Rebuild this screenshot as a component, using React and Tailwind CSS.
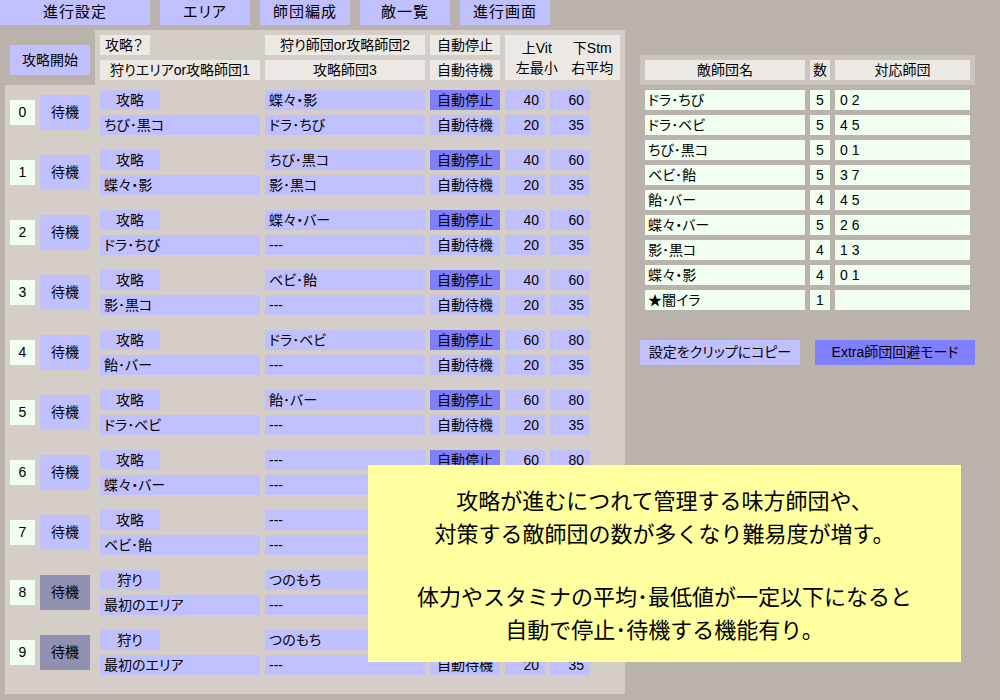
import React from "react";

const rows = [
  { n: 0, wait: "bg-[#c0c0ff]", type: "攻略", area: "ちび･黒コ", a: "蝶々・影", b: "ドラ･ちび", v: [40, 20], s: [60, 35] },
  { n: 1, wait: "bg-[#c0c0ff]", type: "攻略", area: "蝶々・影", a: "ちび･黒コ", b: "影･黒コ", v: [40, 20], s: [60, 35] },
  { n: 2, wait: "bg-[#c0c0ff]", type: "攻略", area: "ドラ･ちび", a: "蝶々・バー", b: "---", v: [40, 20], s: [60, 35] },
  { n: 3, wait: "bg-[#c0c0ff]", type: "攻略", area: "影･黒コ", a: "ベビ･飴", b: "---", v: [40, 20], s: [60, 35] },
  { n: 4, wait: "bg-[#c0c0ff]", type: "攻略", area: "飴･バー", a: "ドラ･ベビ", b: "---", v: [60, 20], s: [80, 35] },
  { n: 5, wait: "bg-[#c0c0ff]", type: "攻略", area: "ドラ･ベビ", a: "飴･バー", b: "---", v: [60, 20], s: [80, 35] },
  { n: 6, wait: "bg-[#c0c0ff]", type: "攻略", area: "蝶々・バー", a: "---", b: "---", v: [60, 20], s: [80, 35] },
  { n: 7, wait: "bg-[#c0c0ff]", type: "攻略", area: "ベビ･飴", a: "---", b: "---", v: [60, 20], s: [80, 35] },
  { n: 8, wait: "bg-[#9090b0]", type: "狩り", area: "最初のエリア", a: "つのもち", b: "---", v: [60, 20], s: [80, 35] },
  { n: 9, wait: "bg-[#9090b0]", type: "狩り", area: "最初のエリア", a: "つのもち", b: "---", v: [60, 20], s: [80, 35] },
];

const enemies = [
  ["ドラ･ちび", "5", "0 2"],
  ["ドラ･ベビ", "5", "4 5"],
  ["ちび･黒コ", "5", "0 1"],
  ["ベビ･飴", "5", "3 7"],
  ["飴･バー", "4", "4 5"],
  ["蝶々・バー", "5", "2 6"],
  ["影･黒コ", "4", "1 3"],
  ["蝶々・影", "4", "0 1"],
  ["★闇イラ", "1", ""],
];

const tabs = [
  ["進行設定", "w-[150px]"],
  ["エリア", "w-[90px]"],
  ["師団編成", "w-[90px]"],
  ["敵一覧", "w-[90px]"],
  ["進行画面", "w-[90px]"],
];

function Box({ className = "", children }) {
  return (
    <div className={`h-[20px] leading-[20px] whitespace-nowrap overflow-hidden ${className}`}>
      {children}
    </div>
  );
}

function Row({ r }) {
  return (
    <div className="flex h-[45px] items-start">
      <div className="mt-[10px] w-[25px] h-[25px] bg-[#f0fff0] flex items-center justify-center">
        {r.n}
      </div>
      <div className={`ml-[5px] mt-[5px] w-[50px] h-[35px] flex items-center justify-center ${r.wait}`}>
        待機
      </div>
      <div className="ml-[10px] flex flex-col gap-[5px]">
        <div className="flex gap-[5px]">
          <div className="w-[160px]">
            <Box className="w-[60px] bg-[#c0c0ff] text-center">{r.type}</Box>
          </div>
          <Box className="w-[160px] bg-[#c0c0ff] pl-[4px]">{r.a}</Box>
          <Box className="w-[70px] bg-[#8080ff] text-center">自動停止</Box>
          <Box className="w-[40px] bg-[#c0c0ff] text-right pr-[6px]">{r.v[0]}</Box>
          <Box className="w-[40px] bg-[#c0c0ff] text-right pr-[6px]">{r.s[0]}</Box>
        </div>
        <div className="flex gap-[5px]">
          <Box className="w-[160px] bg-[#c0c0ff] pl-[4px]">{r.area}</Box>
          <Box className="w-[160px] bg-[#c0c0ff] pl-[4px]">{r.b}</Box>
          <Box className="w-[70px] bg-[#c0c0ff] text-center">自動待機</Box>
          <Box className="w-[40px] bg-[#c0c0ff] text-right pr-[6px]">{r.v[1]}</Box>
          <Box className="w-[40px] bg-[#c0c0ff] text-right pr-[6px]">{r.s[1]}</Box>
        </div>
      </div>
    </div>
  );
}

export default function App() {
  return (
    <div className="relative w-[1000px] h-[700px] overflow-hidden bg-[#bab2ac] text-black text-[14px] font-['Liberation_Sans','Noto_Sans_CJK_JP',sans-serif] [font-feature-settings:'palt']">
      {/* tabs */}
      <div className="flex gap-[10px] h-[25px]">
        {tabs.map(([t, w]) => (
          <div key={t} className={`${w} h-[25px] bg-[#c0c0ff] flex items-center justify-center text-[15px] tracking-[1px]`}>
            {t}
          </div>
        ))}
      </div>

      <div className="flex mt-[5px]">
        {/* left panel */}
        <div className="ml-[5px] w-[620px] flex flex-col">
          <div className="flex h-[55px]">
            <div className="w-[90px] bg-[#bab2ac]">
              <div className="ml-[5px] mt-[15px] w-[80px] h-[30px] bg-[#c0c0ff] flex items-center justify-center">
                攻略開始
              </div>
            </div>
            <div className="flex-1 bg-[#d5cdc7] pl-[5px] pt-[5px] flex gap-[5px]">
              <div className="flex flex-col gap-[5px] w-[160px]">
                <Box className="w-[50px] bg-[#ece9e4] pl-[5px]">攻略？</Box>
                <Box className="w-[160px] bg-[#ece9e4] text-center">狩りエリアor攻略師団1</Box>
              </div>
              <div className="flex flex-col gap-[5px] w-[160px]">
                <Box className="bg-[#ece9e4] text-center">狩り師団or攻略師団2</Box>
                <Box className="bg-[#ece9e4] text-center">攻略師団3</Box>
              </div>
              <div className="flex flex-col gap-[5px] w-[70px]">
                <Box className="bg-[#ece9e4] text-center">自動停止</Box>
                <Box className="bg-[#ece9e4] text-center">自動待機</Box>
              </div>
              <div className="w-[115px] h-[45px] bg-[#ece9e4] grid grid-cols-2 content-center leading-[20px] text-center pl-[4px]">
                <div>上Vit</div>
                <div>下Stm</div>
                <div>左最小</div>
                <div>右平均</div>
              </div>
            </div>
          </div>
          <div className="h-[609px] bg-[#d5cdc7] pl-[5px] pt-[5px] flex flex-col gap-[15px]">
            {rows.map((r) => (
              <Row key={r.n} r={r} />
            ))}
          </div>
        </div>

        {/* right panel */}
        <div className="ml-[15px] pt-[25px] flex flex-col">
          <div className="w-[335px] h-[30px] bg-[#cbc3bd] p-[5px] flex gap-[5px]">
            <Box className="w-[160px] bg-[#ece9e4] text-center">敵師団名</Box>
            <Box className="w-[20px] bg-[#ece9e4] text-center">数</Box>
            <Box className="w-[135px] bg-[#ece9e4] text-center">対応師団</Box>
          </div>
          <div className="mt-[5px] pl-[5px] flex flex-col gap-[5px]">
            {enemies.map(([name, cnt, resp]) => (
              <div key={name} className="flex gap-[5px]">
                <Box className="w-[160px] bg-[#f0fff0] pl-[3px]">{name}</Box>
                <Box className="w-[20px] bg-[#f0fff0] text-center">{cnt}</Box>
                <Box className="w-[135px] bg-[#f0fff0] pl-[5px] whitespace-pre">{resp}</Box>
              </div>
            ))}
          </div>
          <div className="mt-[30px] flex gap-[15px]">
            <div className="w-[160px] h-[25px] bg-[#c0c0ff] flex items-center justify-center">
              設定をクリップにコピー
            </div>
            <div className="w-[160px] h-[25px] bg-[#8080ff] flex items-center justify-center">
              Extra師団回避モード
            </div>
          </div>
        </div>
      </div>

      {/* overlay note */}
      <div className="absolute left-[368px] top-[465px] w-[593px] h-[197px] bg-[#ffffa0] flex flex-col items-center justify-center text-[22px] leading-[33px] [font-feature-settings:normal] font-['Noto_Sans_CJK_JP',sans-serif]">
        <div>攻略が進むにつれて管理する味方師団や、</div>
        <div>対策する敵師団の数が多くなり難易度が増す。</div>
        <div className="h-[30px]"></div>
        <div>体力やスタミナの平均･最低値が一定以下になると</div>
        <div>自動で停止･待機する機能有り。</div>
      </div>
    </div>
  );
}
